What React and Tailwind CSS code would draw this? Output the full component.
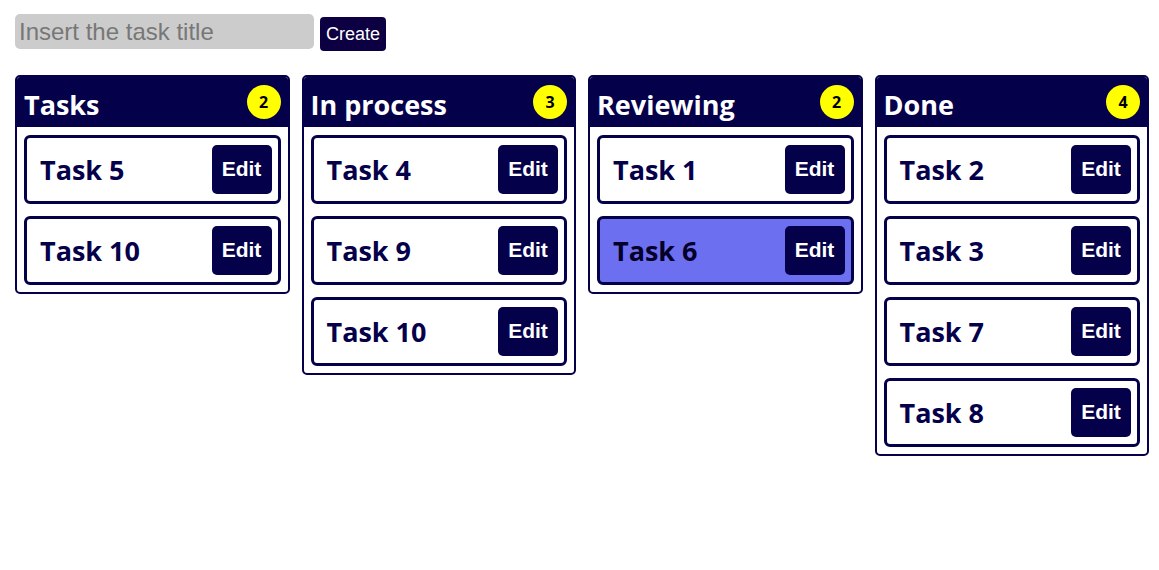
import { useState } from "react";

const columns = [
    { title: "Tasks", tasks: ["Task 5", "Task 10"] },
    { title: "In process", tasks: ["Task 4", "Task 9", "Task 10"] },
    { title: "Reviewing", tasks: ["Task 1", "Task 6"], active: "Task 6" },
    { title: "Done", tasks: ["Task 2", "Task 3", "Task 7", "Task 8"] },
];

function TaskCard({ name, active }) {
    return (
        <div
            className={`flex items-center justify-between h-[69px] border-[3px] border-[#05004a] rounded-[6px] pl-[13px] pr-[6px] ${active ? "bg-[#6c70f0]" : "bg-white"
                }`}
        >
            <span
                className={`text-[27px] font-bold mt-[2px] font-['Open_Sans',sans-serif] ${active ? "text-[#05002a]" : "text-[#05004a]"}`}
            >
                {name}
            </span>
            <button className="w-[60px] h-[49px] rounded-[5px] bg-[#05004a] text-white text-[21px] font-bold pb-[2px] font-['Liberation_Sans',Arial,sans-serif]">
                Edit
            </button>
        </div>
    );
}

function Column({ title, tasks, active }) {
    return (
        <div className="w-[274.5px] shrink-0 border-2 border-[#05004a] rounded-[5px] overflow-hidden bg-white">
            <div className="flex items-center justify-between h-[50px] bg-[#05004a] pl-[7px] pr-[7px]">
                <h2 className="text-white text-[27px] font-bold leading-none mt-[4px] font-['Open_Sans',sans-serif]">
                    {title}
                </h2>
                <span className="flex items-center justify-center w-[34px] h-[34px] rounded-full bg-[#ffff00] text-black text-[16px] font-bold font-['Open_Sans',sans-serif]">
                    {tasks.length}
                </span>
            </div>
            <div className="flex flex-col gap-[12px] px-[7px] pt-[8px] pb-[7px]">
                {tasks.map((t) => (
                    <TaskCard key={t} name={t} active={t === active} />
                ))}
            </div>
        </div>
    );
}

export default function App() {
    const [title, setTitle] = useState("");

    return (
        <div className="bg-white min-h-screen pt-[14px] px-[15px] font-['Liberation_Sans',Arial,sans-serif]">
            <div className="flex items-start gap-[6px]">
                <input
                    value={title}
                    onChange={(e) => setTitle(e.target.value)}
                    placeholder="Insert the task title"
                    className="w-[299px] h-[35px] rounded-[5px] bg-[#cccccc] px-[4px] text-[24px] text-black placeholder:text-[#777777] outline-none"
                />
                <button className="mt-[3px] h-[34px] px-[6px] rounded-[4px] bg-[#0d0042] text-white text-[18px]">
                    Create
                </button>
            </div>

            {/* Board */}
            <div className="flex items-start gap-[12px] mt-[24px]">
                {columns.map((c) => (
                    <Column key={c.title} {...c} />
                ))}
            </div>
        </div>
    );
}
